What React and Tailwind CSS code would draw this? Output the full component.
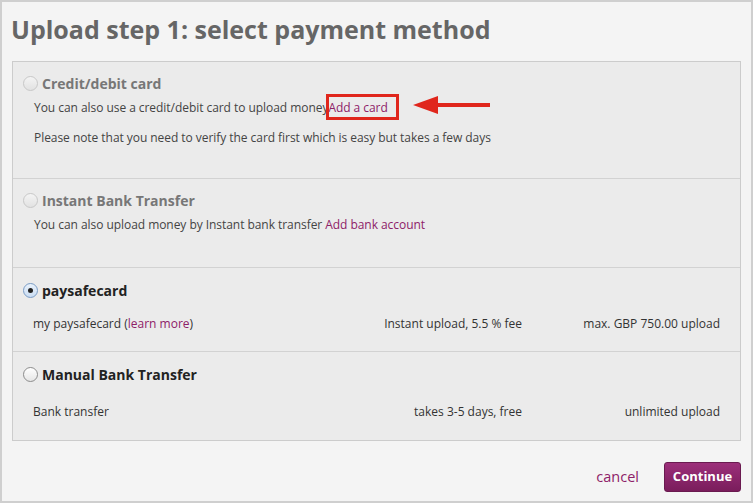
import React from 'react';

const font = { fontFamily: '"Open Sans", "Liberation Sans", sans-serif' };

// radio button look-alike
const Radio = ({ checked, disabled }) => (
  <span
    className={`inline-flex items-center justify-center w-[15px] h-[15px] rounded-full border ${
      disabled
        ? 'border-[#c8c8c8] bg-gradient-to-b from-[#f4f4f4] to-[#e2e2e2]'
        : checked
        ? 'border-[#7a9cc6] bg-gradient-to-b from-[#eaf2fb] to-[#c9dcf2]'
        : 'border-[#8c8c8c] bg-gradient-to-b from-white to-[#e6e6e6]'
    }`}
  >
    {checked && <span className="w-[5px] h-[5px] rounded-full bg-[#222]" />}
  </span>
);

const Title = ({ children, disabled, checked }) => (
  <div className="flex items-center gap-[4px] pl-[10px] h-[20px]">
    <Radio disabled={disabled} checked={checked} />
    <span className={`text-[14px] font-bold ${disabled ? 'text-[#777]' : 'text-[#222]'}`}>{children}</span>
  </div>
);

const Row = ({ left, mid, right }) => (
  <div className="flex items-center pl-[20px] pr-[20px] text-[12px] text-[#333]">
    <div className="flex-1">{left}</div>
    <div className="w-[200px] text-right">{mid}</div>
    <div className="w-[198px] text-right">{right}</div>
  </div>
);

export default function App() {
  return (
    <div style={font} className="w-[753px] h-[503px] bg-[#f4f4f4] border-2 border-[#cfcfcf] box-border">
      <h1 className="pl-[9px] pt-[10px] h-[59px] text-[25px] leading-[34px] font-bold text-[#666]">
        Upload step 1: select payment method
      </h1>

      <div className="mx-[10px] border border-[#cccccc] bg-[#ebebeb]">
        {/* credit card */}
        <div className="h-[117px] border-b border-[#d2d2d2] pt-[11px]">
          <Title disabled>Credit/debit card</Title>
          <div className="pl-[21px] mt-[6px] text-[12px] tracking-[-0.05px] text-[#444]">
            You can also use a credit/debit card to upload money
            <span className="relative text-[#8e2168]">
              Add a card
              <span className="absolute left-[-2px] right-[-11px] top-[-5px] bottom-[-4px] border-[3px] border-[#e0261c]" />
              <svg className="absolute left-[84px] top-[-5px]" width="82" height="24" viewBox="0 0 82 24">
                <path d="M1 11 L26 2 L26 9 L78 9 L78 13 L26 13 L26 20 Z" fill="#e0261c" />
              </svg>
            </span>
          </div>
          <div className="pl-[21px] mt-[12px] text-[12px] tracking-[-0.05px] text-[#444]">
            Please note that you need to verify the card first which is easy but takes a few days
          </div>
        </div>

        {/* instant bank */}
        <div className="h-[89px] border-b border-[#d2d2d2] pt-[11px]">
          <Title disabled>Instant Bank Transfer</Title>
          <div className="pl-[21px] mt-[6px] text-[12px] tracking-[-0.05px] text-[#444]">
            You can also upload money by Instant bank transfer{' '}
            <span className="text-[#8e2168]">Add bank account</span>
          </div>
        </div>

        {/* paysafecard */}
        <div className="h-[84px] border-b border-[#d2d2d2] pt-[12px]">
          <Title checked>paysafecard</Title>
          <div className="mt-[15px]">
            <Row
              left={<span>my paysafecard (<span className="text-[#8e2168]">learn more</span>)</span>}
              mid="Instant upload, 5.5 % fee"
              right="max. GBP 750.00 upload"
            />
          </div>
        </div>

        {/* manual */}
        <div className="h-[88px] pt-[12px]">
          <Title>Manual Bank Transfer</Title>
          <div className="mt-[19px]">
            <Row left="Bank transfer" mid="takes 3-5 days, free" right="unlimited upload" />
          </div>
        </div>
      </div>

      <div className="flex items-center justify-end gap-[25px] pr-[10px] mt-[21px]">
        <span className="text-[14.5px] text-[#8e2168]">cancel</span>
        <button className="w-[77px] h-[30px] rounded-[3px] border border-[#6a1a50] bg-gradient-to-b from-[#9c2f7a] to-[#7a1d5c] text-white text-[13px] font-bold">
          Continue
        </button>
      </div>
    </div>
  );
}
